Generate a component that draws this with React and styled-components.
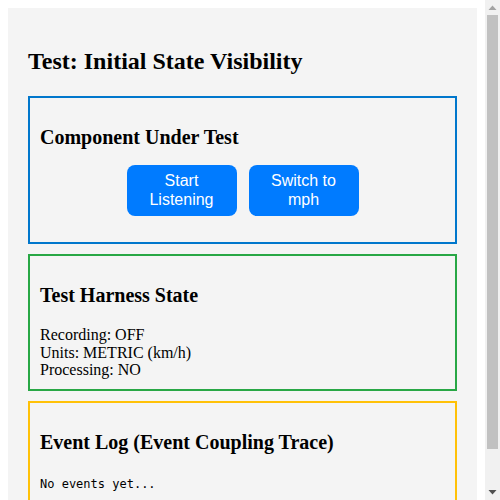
import React from "react";
import styled, { createGlobalStyle } from "styled-components";

const GlobalStyle = createGlobalStyle`
  body {
    margin: 8px 23px 8px 8px;
    background: #ffffff;
    font-family: "Liberation Serif", "Times New Roman", serif;
    color: #000000;
  }
`;

const Page = styled.div`
  background: #f4f4f4;
  padding: 20px;
`;

const Title = styled.h1`
  font-size: 24px;
  font-weight: 700;
  margin: 20px 0 21px;
`;

const Panel = styled.section`
  border: 2px solid ${(p) => p.$color};
  padding: 10px;
  margin-bottom: 10px;
`;

const PanelTitle = styled.h2`
  font-size: 20px;
  font-weight: 700;
  margin: 17.6px 0 16.6px;
`;

const ButtonRow = styled.div`
  display: flex;
  justify-content: center;
  gap: 12px;
  margin: 4px 0 16px;
`;

const Button = styled.button`
  width: 110px;
  padding: 7px 12px;
  border: none;
  border-radius: 8px;
  background: #007bff;
  color: #ffffff;
  font-family: "Liberation Sans", Arial, sans-serif;
  font-size: 16px;
  line-height: 1.15;
  cursor: pointer;
`;

const StateList = styled.div`
  padding-top: 3px;
  font-size: 16px;
  line-height: 17.6px;
`;

const Log = styled.div`
  padding: 7px 0 5px;
  font-family: "DejaVu Sans Mono", "Liberation Mono", monospace;
  font-size: 12px;
`;

/* stand-in for the browser's vertical scrollbar */
const ScrollTrack = styled.div`
  position: fixed;
  top: 0;
  right: 0;
  width: 15px;
  height: 100vh;
  background: #f1f1f1;
  display: flex;
  flex-direction: column;
  align-items: center;
`;

const Arrow = styled.div`
  height: 15px;
  width: 15px;
  display: flex;
  align-items: center;
  justify-content: center;
`;

const Thumb = styled.div`
  width: 11px;
  height: 434px;
  background: #c1c1c1;
`;

const Spacer = styled.div`
  flex: 1;
`;

export default function App() {
  return (
    <>
      <GlobalStyle />
      <Page>
        <Title>Test: Initial State Visibility</Title>

        <Panel $color="#0077cc">
          <PanelTitle>Component Under Test</PanelTitle>
          <ButtonRow>
            <Button>Start Listening</Button>
            <Button>Switch to mph</Button>
          </ButtonRow>
        </Panel>

        <Panel $color="#28a745">
          <PanelTitle>Test Harness State</PanelTitle>
          <StateList>
            <div>Recording: OFF</div>
            <div>Units: METRIC (km/h)</div>
            <div>Processing: NO</div>
          </StateList>
        </Panel>

        <Panel $color="#ffc107">
          <PanelTitle>Event Log (Event Coupling Trace)</PanelTitle>
          <Log>No events yet...</Log>
        </Panel>
      </Page>

      <ScrollTrack>
        <Arrow>
          <svg width="9" height="5" viewBox="0 0 9 5">
            <polygon points="0.5,5 4.5,0.5 8.5,5" fill="#a3a3a3" />
          </svg>
        </Arrow>
        <Thumb />
        <Spacer />
        <Arrow>
          <svg width="9" height="5" viewBox="0 0 9 5">
            <polygon points="0.5,0 8.5,0 4.5,4.5" fill="#505050" />
          </svg>
        </Arrow>
      </ScrollTrack>
    </>
  );
}
